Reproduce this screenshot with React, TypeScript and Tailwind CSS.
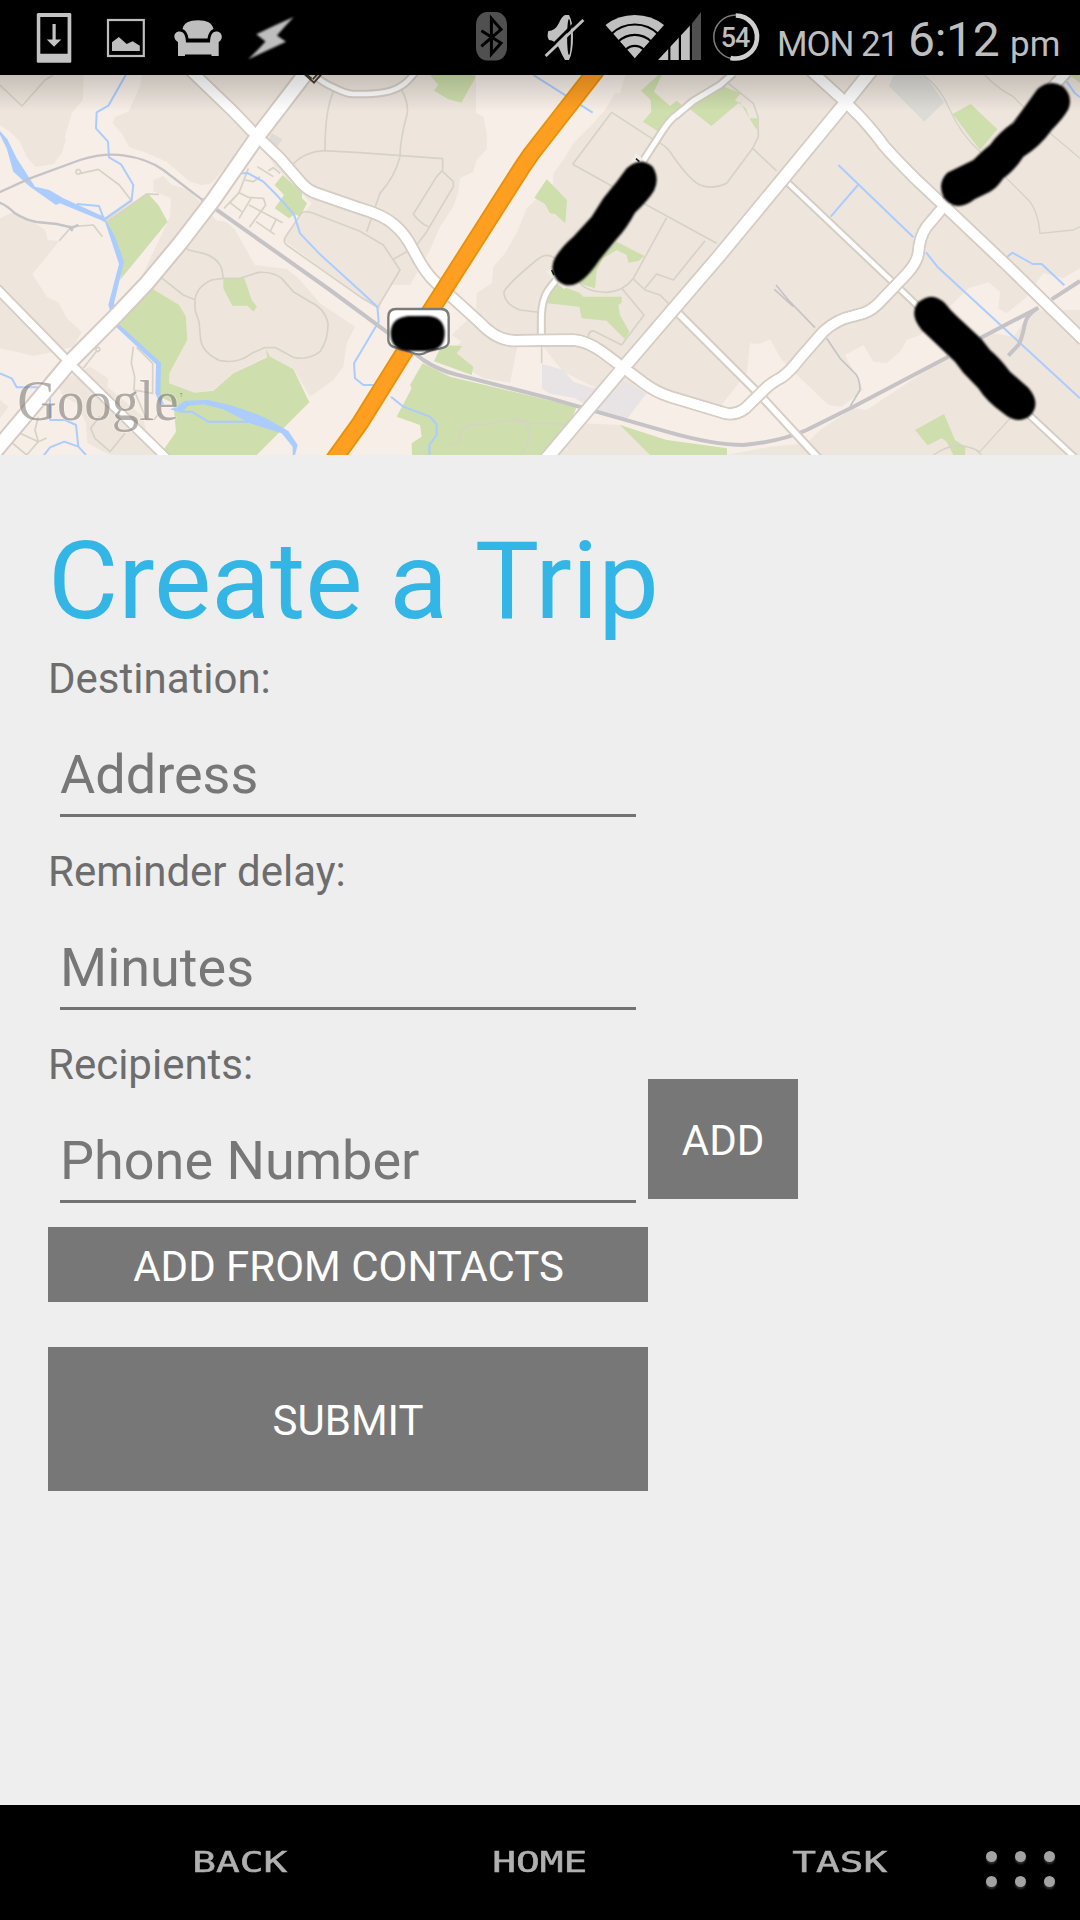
import React from "react";

function Road({ d, w, casing = "#d6cec4" }: { d: string; w: number; casing?: string }) {
  return (
    <g fill="none" strokeLinejoin="round">
      <path d={d} stroke={casing} strokeWidth={w + 12} />
      <path d={d} stroke="#fff" strokeWidth={w} />
    </g>
  );
}

const ROADS = {
  west: "M-20 1150L208 878L350 735L440 640L540 520L640 390L772 200L925 0",
  cross: "M570 0L700 125L772 200L840 265L905 340Q925 362 950 370L1080 415Q1150 436 1180 462Q1215 490 1240 540Q1275 610 1310 640L1440 758Q1490 812 1545 812L1720 810Q1760 812 1810 848L1870 893L1930 938Q1965 965 2010 980L2160 1025Q2200 1042 2236 1015L2290 962Q2310 940 2345 922Q2370 905 2400 865L2470 785Q2510 748 2560 738L2590 730Q2620 720 2650 685L2720 612Q2750 580 2755 550Q2758 500 2780 470L2835 405",
  southWest: "M-10 655L208 878L500 1165",
  diagonal: "M1636 1170L1870 893L2160 555L2350 325L2535 100L2615 0",
  east: "M2430 0L2537 97L2580 140Q2630 195 2650 225Q2680 260 2745 325L2835 410L3020 585L3250 810",
  lane: "M2355 330L2680 638L2750 705L3050 1000L3230 1168",
  southLane: "M2025 720L2160 855L2280 975L2460 1170",
  hook: "M1624 800V740Q1625 690 1645 660L1670 628M1930 272L1970 210Q2010 145 2030 135L2080 93L2160 45L2200 10",
  northWest: "M935 10Q970 40 1000 52Q1040 72 1060 72L1100 72Q1170 70 1200 50Q1220 40 1245 8",
};

function MapView() {
  return (
    <div className="relative h-[380px] overflow-hidden bg-[#f7eee7]">
      <svg className="block h-full w-full" viewBox="0 15 3240 1140" preserveAspectRatio="none">
        <defs>
          <linearGradient id="topShade" x1="0" y1="0" x2="0" y2="1">
            <stop offset="0" stopColor="#000" stopOpacity=".17" />
            <stop offset="1" stopColor="#000" stopOpacity="0" />
          </linearGradient>
          <filter id="soft"><feGaussianBlur stdDeviation="2.5" /></filter>
        </defs>
        <g fill="#eee6dd">
          <path d="M0 0H252L248 90L215 130L195 200L198 208L185 250L160 282L107 291L80 260L60 215L30 185L0 165Z" />
          <path d="M430 0L418 55L385 125L345 140L338 160L365 190L388 232L430 245L500 275L570 335L605 346L635 340L770 180L820 285L885 350L935 400L850 510L1080 680L1140 720L1145 690L1170 645L1230 645L1290 540L1320 470L1360 410L1375 365L1380 325L1420 305L1430 270L1460 238V190L1450 140L1428 128V0Z" />
          <path d="M0 445L40 425L75 440L135 480L143 510L178 513L97 612L140 680L175 697L200 745L245 785L220 830L150 848L100 857L0 835Z" />
          <path d="M460 330L490 318L515 345L565 358L600 395L650 452L680 456L705 480L765 585L860 597L895 625L960 700L1065 770L1040 820L1030 890L1000 930L930 980L880 895L800 860L700 910L640 960L580 968L510 940L508 910L562 810L560 745L540 705L455 655L430 610L510 440L513 385L460 363Z" />
          <path d="M270 890L325 925L322 950L430 1040L440 1100L470 1155H330L262 1120L258 1060L230 1000L190 980L170 940ZM0 990L25 1010L0 1045Z" />
          <path d="M1880 0L1860 70H1845L1815 120L1780 160L1720 220L1690 270L1660 310V340L1580 415L1552 485L1515 550L1480 590L1475 640L1430 670L1428 725L1355 795L1385 815L1330 855L1450 925L1530 938L1552 830L1625 825L1690 905L1780 950H1880L1940 965L2160 1010L2240 910L2250 820L2278 822L2310 808L2345 870L2485 1005L2525 1010L2590 960L2535 855L2590 825L2620 875L2660 880L2700 845L2720 810L2760 795L2860 700L2905 655L2965 637L3000 665L2995 715L3020 730L3080 680L3130 610L3190 625L3240 595V0Z" />
          <path d="M3240 720L3100 720L3040 800L2980 790L2840 860L2600 1020L2560 1015L2460 1080L2420 1120L2310 1130L2180 1155H3240ZM1740 1060L1870 1065L1950 1155H1670Z" />
        </g>
        <g fill="#cedeac">
          <path d="M320 457L443 370L475 405L503 455L360 630L368 570Z" />
          <path d="M848 315L870 335L906 365V385L921 400L900 440L885 432L867 445L824 415L852 375L824 345Z" />
          <path d="M455 655L538 705L558 740L562 810L508 910V940L583 968L640 962L700 910L802 862L797 836L810 860L880 897L928 997L770 1155H480L528 1085L520 1000L480 980V880L350 760Z" />
          <path d="M670 625H733L755 690L771 710L760 725L743 707H697L670 655Z" />
          <path d="M1290 15H1425V25L1384 98L1345 88L1302 62L1315 45Z" />
          <path d="M1975 15L1923 62L1952 90L1954 125L1929 155L1976 185L2050 110L2030 92L2010 108L1962 65L1985 15ZM2070 118L2134 168L2220 95L2245 140L2272 182V145H2248L2238 115L2205 90L2222 70L2160 45Z" />
          <path d="M1640 328L1701 390L1696 460L1665 432L1650 430L1635 402L1603 383Z" />
          <path d="M1850 515L1933 558L1915 573L1885 578L1880 555L1850 540L1810 565L1790 600L1785 655L1735 640Z" />
          <path d="M1660 640L1738 668L1750 680H1865V698L1855 705L1860 735L1888 785L1875 808L1820 752L1745 745L1738 710L1642 700Z" />
          <path d="M1325 825L1387 828L1370 850L1420 890L1415 915L1302 874Z" />
          <path d="M1268 880L1350 920L1730 1010L1670 1155H1236L1235 1120L1265 1100L1260 1065L1190 1040L1235 955L1230 945Z" />
          <path d="M1860 1065L2000 1110L2181 1135V1155H1950Z" />
          <path d="M2858 132L2912 102L2992 178L2940 240Z" />
          <path d="M2745 1080L2832 1032L2865 1110L2896 1130L2895 1155H2860L2840 1115L2825 1105L2783 1126ZM3210 15H3240V40Z" />
        </g>
        <path d="M1626 882L1690 900L1720 935L1780 955L1850 920L1940 970L1880 1048L1790 1025L1725 985L1645 970L1626 955Z" fill="#e8e4e6" />
        <path d="M2682 15H2775L2832 97L2773 155L2666 47ZM815 190L847 208L832 230L805 215Z" fill="#dcdbd6" />
        <g fill="none" stroke="#d6d2c6" strokeWidth="5" strokeLinejoin="round">
          <path d="M0 45L66 108L135 30L160 15M240 310A7 7 0 1 0 239 311L295 298L358 345L395 393L310 455M178 512L215 470L280 465L307 500M320 455L440 372L477 373" />
          <path d="M250 895L290 843A6 6 0 1 0 289 842M400 830L394 880L404 920L402 960L440 1050L463 1048L477 1030M402 960L458 970V880L410 832M375 1090L330 1145L285 1105L272 1075L300 1038M20 1105L80 1155L115 1115L105 1080L115 1040M60 1090L115 1115L140 1104" />
          <path d="M745 295L717 368L672 415M717 368L745 382L790 385L797 405L748 472M717 368L690 398L725 425M755 382L717 445M747 405L848 458M830 445L810 485M768 455L824 493M735 330L760 335L780 320M772 290L820 320M805 302L820 293L840 310" />
          <path d="M480 620L550 675L585 689V720L597 755L602 810Q610 850 660 872Q715 882 755 850L793 833H827L880 862Q925 872 960 845Q985 810 984 760Q975 715 930 695L880 665L845 625Q820 605 775 607L720 625H670L635 630Q590 650 585 689M670 625L665 595Q650 560 610 550L565 540L550 525M1080 680L860 525Q845 515 860 495L905 430Q915 420 940 430L1080 484" />
          <path d="M875 285Q915 245 970 242L1080 248L1328 266V300L1310 320L1240 432Q1260 460 1285 470M1325 302L1360 335V350L1280 485L1250 525M1000 65Q975 120 975 242M1205 60Q1225 95 1222 130Q1200 210 1200 260Q1185 320 1140 370L1100 485M1080 484L1150 525L1200 600L1133 712L1080 680M1180 568L1220 545" />
          <path d="M1718 283L1835 127L1970 215Q2000 225 2020 260Q2070 330 2100 345Q2140 360 2180 340L2258 235L2275 200L2274 140L2260 100L2185 40M1718 283L1830 345L2150 520M2000 443L1900 625Q1870 665 1820 667Q1760 665 1740 640M2115 512L2020 630L1970 612L1935 655M1898 625L1935 660L1980 675L2005 700M1865 655L1932 735L1865 825L1780 782Q1765 785 1765 800M1625 728L1560 720Q1510 700 1512 665Q1525 640 1610 570Q1640 545 1665 565M1625 810V880M2258 235L2330 303" />
          <path d="M2770 15Q2820 50 2850 120Q2880 190 2940 245L3090 395Q3115 430 3120 490L3220 480L3240 470M2955 15Q2985 50 3040 80L3145 185L3240 265M2800 1155Q2865 1110 2925 1138L2940 1145L3030 1045M2925 1138L2945 1155M1350 1128L1380 1110Q1375 1070 1410 1065L1460 1063L1500 1055L1560 1050L1590 1075M1545 1044L1600 1060L1700 1062M1560 1155Q1600 1110 1580 1080" strokeWidth="4" />
        </g>
        <g fill="none" stroke="#aaccff" strokeWidth="6" strokeLinejoin="round">
          <path d="M380 10L325 107L290 127L288 175L324 215L327 262L363 283L400 345L395 390L312 448L297 408L230 402M0 910L35 925L50 952H125M150 980V1050H195L228 1065L235 1130L258 1155M235 1130L193 1115L150 1132L130 1158M720 310H745L790 335L830 375L882 433L900 490L960 553L1080 662L1132 710L1136 755L1080 850L1062 880L1065 925L1090 945H1130M1173 980L1210 1010L1290 1040L1310 1063V1095L1288 1125V1155" />
          <path d="M1600 15L1778 128M2515 285L2740 502M2574 345L2492 440M2778 547L2812 590L3240 985M3022 560L3037 548L3098 582H3125L3193 646M3200 35L3225 70L3240 82M545 1025H575L625 1055H750" />
        </g>
        <g fill="#aaccff">
          <path d="M0 183L22 208L50 265L105 350L148 360L190 385L312 440L345 500L372 575L342 700L350 756L365 770L483 878L481 970L492 1005L480 1003L466 970L468 883L345 768L325 705L357 582L315 455L180 400L168 405L90 350L40 305L20 235L0 195Z" />
          <path d="M510 1018L530 1010L555 992L625 990L700 1008L790 1040L865 1083L893 1125L885 1155H878V1130L845 1090L750 1060L670 1018L610 1003L565 1007L545 1028Z" />
        </g>
        <g fill="none" stroke="#c5c3c6" strokeWidth="7">
          <path d="M-5 368L90 325L240 270Q310 248 370 256Q440 265 490 300L605 388M-5 396Q20 405 45 430Q75 450 110 456L170 462L218 473L235 464M205 468L218 483" />
          <path d="M605 388L645 416L990 660L1150 778L1270 870Q1310 898 1370 914L1650 985L2000 1085Q2140 1125 2230 1125Q2340 1115 2420 1080L2560 1010L2845 860M2940 805L3115 713M3155 688L3240 633M3115 713Q3080 735 3075 760Q3065 810 3055 825L3025 857" strokeWidth="12" />
          <path d="M2328 645L2365 690L2445 773M2323 658L2380 710M2480 805L2520 865L2560 905Q2580 920 2580 960L2550 1010" strokeWidth="5" />
        </g>
        <Road d={ROADS.northWest} w={14} />
        <Road d={ROADS.hook} w={15} />
        <Road d={ROADS.lane} w={13} />
        <Road d={ROADS.southLane} w={17} />
        <Road d={ROADS.southWest} w={21} />
        <Road d={ROADS.cross} w={28} />
        <Road d={ROADS.west} w={40} casing="#d5cac4" />
        <Road d={ROADS.diagonal} w={34} />
        <Road d={ROADS.east} w={28} />
        <Road d="M2835 405L3200 5" w={28} />
        <g fill="none" stroke="#fff">
          <path d={ROADS.southWest} strokeWidth="21" />
          <path d={ROADS.cross} strokeWidth="28" />
          <path d={ROADS.diagonal} strokeWidth="34" />
          <path d={ROADS.east} strokeWidth="28" />
        </g>
        <g fill="none">
          <path d="M990 1185L1080 1060L1220 835L1545 325Q1570 285 1595 250L1790 0" stroke="#e89208" strokeWidth="54" />
          <path d="M990 1185L1080 1060L1220 835L1545 325Q1570 285 1595 250L1790 0" stroke="#ff9f22" strokeWidth="43" />
        </g>
        <path d="M900 0L942 38L975 0" fill="#e7e2da" stroke="#494032" strokeWidth="6" />
        <path d="M922 15L935 26M955 10L938 28" stroke="#494032" strokeWidth="5" />
        <path d="M1890 285L1908 248L1932 270ZM1640 605L1655 595L1700 650L1692 658Z" fill="#f1eee8" />
        <path d="M1908 266L1918 275M1655 600L1662 615" stroke="#222" strokeWidth="5" />
        <rect x="0" y="15" width="3240" height="110" fill="url(#topShade)" />
        <path d="M1188 717H1322Q1346 717 1346 741V815Q1346 830 1320 836Q1290 840 1270 851Q1255 856 1238 849Q1215 838 1190 834Q1165 828 1165 810V741Q1165 717 1188 717Z" fill="#fff" stroke="#7b7b7b" strokeWidth="7" />
        <g filter="url(#soft)">
          <path d="M1225 738H1285Q1334 742 1334 790Q1334 842 1280 843H1225Q1172 840 1172 790Q1172 744 1225 738Z" />
          <path d="M1880 295Q1920 258 1958 290Q1980 325 1962 362Q1945 390 1905 428Q1880 475 1850 507L1797 572Q1775 605 1750 628Q1708 662 1673 632Q1645 598 1666 562Q1685 530 1720 500L1775 440L1810 385L1850 335Z" />
          <path d="M3112 58Q3150 25 3190 50Q3220 80 3205 118Q3190 145 3155 180Q3120 230 3070 260Q3045 300 3010 325Q2990 355 2970 365L2925 387Q2870 430 2832 385Q2810 340 2842 308L2920 270Q2950 240 2970 225Q2995 188 3040 158Q3075 110 3112 58Z" />
          <path d="M2752 700Q2795 660 2835 700Q2850 720 2870 738L2945 808L2970 840Q3000 865 3030 905L3085 953Q3125 1000 3090 1038Q3050 1065 3010 1030Q2960 995 2935 955L2890 908L2865 875L2818 830L2765 780Q2728 735 2752 700Z" />
        </g>
        <text x="52" y="1049" textLength="484" lengthAdjust="spacingAndGlyphs" fontFamily="Liberation Serif, serif" fontSize="172" fill="#76716c" fillOpacity=".55" stroke="#fff" strokeOpacity=".35" strokeWidth="5" paintOrder="stroke">Google</text>
        <text x="539" y="982" fontFamily="Liberation Sans, sans-serif" fontSize="14" fill="#8f8b87">T</text>
      </svg>
    </div>
  );
}

function StatusBar() {
  return (
    <header className="flex h-[75px] w-full items-start bg-black text-[#bebebe]">
      <svg className="h-[75px] w-[90px]" viewBox="0 0 90 75" fill="#c3c3c3">
        <path fillRule="evenodd" d="M38 13H70.5L71.3 14V62L70.5 62.7H37.7L36.8 62V14ZM40.3 17V53.7H67.6V17Z" />
        <path d="M52.5 24H55.7V39.5H61.3L54 46.7L46.8 39.5H52.5Z" />
      </svg>
      <svg className="h-[75px] w-[70px]" viewBox="90 0 70 75" fill="#bebebe">
        <rect x="108" y="20" width="35.8" height="36" fill="none" stroke="#bebebe" strokeWidth="2.2" />
        <path d="M112 51V42.3L118.8 37L126.7 44L132.6 41.3L139.8 45.7V51Z" />
      </svg>
      <svg className="h-[75px] w-[75px] blur-[0.5px]" viewBox="160 0 75 75" fill="#bebebe">
        <path d="M182.5 29C184 23 189 20.300 198 20.300S212 23 213.500 29Q208.500 31 207.500 38.500H188.500Q187.500 31 182.500 29Z" />
        <path d="M179.500 31.500C184 31.500 185.500 35 186 42.500H210C210.500 35 212 31.500 216.500 31.500C222 31.500 224 38.500 218.700 42V56H211.500V54.500H185V56H178V42C172 38.500 174 31.500 179.500 31.500Z" />
      </svg>
      <svg className="h-[75px] w-[75px] blur-[0.8px]" viewBox="235 0 75 75" fill="#bebebe">
        <path d="M293.700 17Q286 25 277 35.500L286 41.700Q268 50 248.300 59.300Q257 51 265.500 41.500L256.300 34.300Q275 25 293.700 17Z" />
      </svg>
      <svg className="ml-[150px] h-[75px] w-[65px]" viewBox="460 0 65 75">
        <rect x="476" y="12" width="31" height="48.500" rx="11" ry="13" fill="#505050" />
        <path d="M481.400 30.700L501 43L491.400 54V18.500L501 29.300L481.400 46.300" fill="none" stroke="#000" strokeWidth="3" />
      </svg>
      <svg className="h-[75px] w-[70px]" viewBox="525 0 70 75">
        <path d="M548.400 31Q555 31 559 23Q562 16 565 15H569Q573 22 573 37T569 60H565Q562 55 559 48Q555 40 549 40Q546.500 36 548.400 31Z" fill="#c0c0c0" />
        <ellipse cx="569" cy="37" rx="1.900" ry="18" fill="#000" />
        <path d="M543 55L583 15" stroke="#000" strokeWidth="3" />
        <path d="M545.600 56L583.400 20" stroke="#c0c0c0" strokeWidth="3" />
      </svg>
      <svg className="h-[75px] w-[113px]" viewBox="595 0 113 75">
        <path d="M634.800 58.300L605.500 25Q618 15 634.800 15T664 25Z" fill="#c0c0c0" />
        <g fill="none" stroke="#000" strokeWidth="2.200">
          <circle cx="634.800" cy="58.300" r="33.800" />
          <circle cx="634.800" cy="58.300" r="23.400" />
          <circle cx="634.800" cy="58.300" r="12.500" />
        </g>
        <path d="M658 60L691.500 24V60Z" fill="#c0c0c0" />
        <path d="M692 23.500L701 12V60H692Z" fill="#505050" />
        <path d="M669.300 40V61M679.900 30V61M690.900 20V61" stroke="#000" strokeWidth="2.200" />
      </svg>
      <div className="relative flex h-[75px] w-[56px] items-center justify-center">
        <svg className="absolute inset-0 h-[75px] w-[56px]" viewBox="708 0 56 75" fill="none">
          <circle cx="735.800" cy="37" r="22" stroke="#7c7c7c" strokeWidth="1.500" />
          <path d="M735.800 15.500A21.500 21.500 0 1 1 730.500 57.900" stroke="#cfcfcf" strokeWidth="4.600" />
        </svg>
        <span className="relative right-px text-[27px] font-medium leading-[74px] tracking-[-1px]">54</span>
      </div>
      <div className="ml-[13px] flex items-baseline whitespace-nowrap leading-[79px]">
        <span className="w-[131px] text-[35px] tracking-[-1.1px]">MON 21</span>
        <span className="w-[101px] text-[48px] tracking-[-0.3px]">6:12</span>
        <span className="ml-px text-[35px]">pm</span>
      </div>
    </header>
  );
}

function Field({ label, hint }: { label: string; hint: string }) {
  return (
    <div className="w-[600px]">
      <div className="text-[42px] leading-[50px] text-[#6d6d6d]">{label}</div>
      <div className="mx-3 mt-[39px] border-b-[3px] border-[#727272] pb-[7px] text-[54px] leading-[64px] text-[#777]">{hint}</div>
    </div>
  );
}

function NavBar() {
  return (
    <nav className="flex h-[115px] bg-black pl-[90px]">
      {["BACK", "HOME", "TASK"].map((label) => (
        <div key={label} className="flex w-[300px] justify-center font-['DejaVu_Sans_Mono',monospace] text-[28px] leading-[115px] text-[#b0b0b0]">
          <span className="block scale-x-[1.41] [-webkit-text-stroke:0.5px_#b0b0b0]">{label}</span>
        </div>
      ))}
      <div className="-ml-1 mt-[46px] grid h-[36px] grid-cols-[repeat(3,11px)] gap-x-[18px] gap-y-[14px]">
        {[0, 1, 2, 3, 4, 5].map((i) => (
          <i key={i} className="block h-[11px] w-[11px] rounded-full bg-[#a3a3a3] shadow-[0_2px_2px_#333]" />
        ))}
      </div>
    </nav>
  );
}

export default function App() {
  return (
    <div className="flex h-[1920px] w-[1080px] flex-col overflow-hidden bg-[#eee] font-[Roboto,sans-serif]">
      <StatusBar />
      <MapView />
      <main className="flex flex-1 flex-col items-start px-12 pt-[61px]">
        <h1 className="mb-2 text-[108px] leading-[130px] text-[#33b5e5]">Create a <span className="inline-block">Trip</span></h1>
        <div className="flex flex-col gap-[30px]">
          <Field label="Destination:" hint="Address" />
          <Field label="Reminder delay:" hint="Minutes" />
          <div className="flex items-start">
            <Field label="Recipients:" hint="Phone Number" />
            <button className="mt-[39px] h-[120px] w-[150px] bg-[#777] pt-[2px] text-[42px] text-white">ADD</button>
          </div>
        </div>
        <button className="mt-6 h-[75px] w-[600px] bg-[#777] pl-px pt-1 text-[42px] text-white">ADD FROM CONTACTS</button>
        <button className="mt-[45px] h-[144px] w-[600px] bg-[#777] pt-[2px] text-[42px] text-white">SUBMIT</button>
      </main>
      <NavBar />
    </div>
  );
}
